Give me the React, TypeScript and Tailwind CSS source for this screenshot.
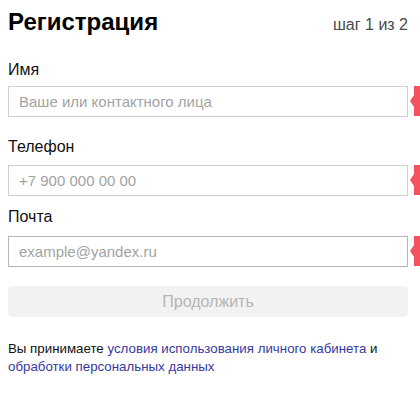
import React from "react";

const font = { fontFamily: '"Liberation Sans", Arial, sans-serif' };

function Marker() {
  // red error flag sticking out on the right of a field
  return (
    <div className="absolute left-[calc(100%+2px)] top-0 bottom-px flex items-center">
      <div className="h-0 w-0 border-y-[6px] border-r-[4px] border-y-transparent border-r-[#f5515f]" />
      <div className="h-full w-[6px] bg-[#f5515f]" />
    </div>
  );
}

function Field({
  label,
  placeholder,
  className,
  gap,
  border,
}: {
  label: string;
  placeholder: string;
  className: string;
  gap: string;
  border: string;
}) {
  return (
    <div className={className}>
      <label className={`block text-[16px] leading-6 text-[#111] ${gap}`}>{label}</label>
      <div className="relative">
        <input
          placeholder={placeholder}
          className={`block h-[31px] w-full border bg-white pl-[10px] text-[15px] text-black outline-none placeholder:text-[#a3a3a3] ${border}`}
          style={font}
        />
        <Marker />
      </div>
    </div>
  );
}

export default function App() {
  return (
    <div className="h-[397px] w-[420px] overflow-hidden bg-white pl-2 pr-3 pt-2" style={font}>
      <div className="flex items-baseline justify-between">
        <h1 className="text-[24px] font-bold leading-7 text-black">Регистрация</h1>
        <span className="text-[16px] text-[#4a4a4a]">шаг 1 из 2</span>
      </div>

      <Field
        label="Имя"
        placeholder="Ваше или контактного лица"
        className="mt-[21px]"
        gap="mb-1"
        border="border-[#cfcfcf]"
      />
      <Field
        label="Телефон"
        placeholder="+7 900 000 00 00"
        className="mt-[18px]"
        gap="mb-1.5"
        border="border-[#cfcfcf]"
      />
      <Field
        label="Почта"
        placeholder="example@yandex.ru"
        className="mt-[9px]"
        gap="mb-[7px]"
        border="border-[#b5b5b5]"
      />

      <button
        disabled
        className="mt-[19px] block h-[31px] w-full rounded-[4px] bg-[#f2f2f2] text-[16px] text-[#b5b5b5]"
        style={font}
      >
        Продолжить
      </button>

      <p className="mt-[23px] text-[13.3px] leading-[18px] text-[#111]">
        Вы принимаете{" "}
        <a className="text-[#36399e]">условия использования личного кабинета</a> и{" "}
        <a className="text-[#36399e]">обработки персональных данных</a>
      </p>
    </div>
  );
}
